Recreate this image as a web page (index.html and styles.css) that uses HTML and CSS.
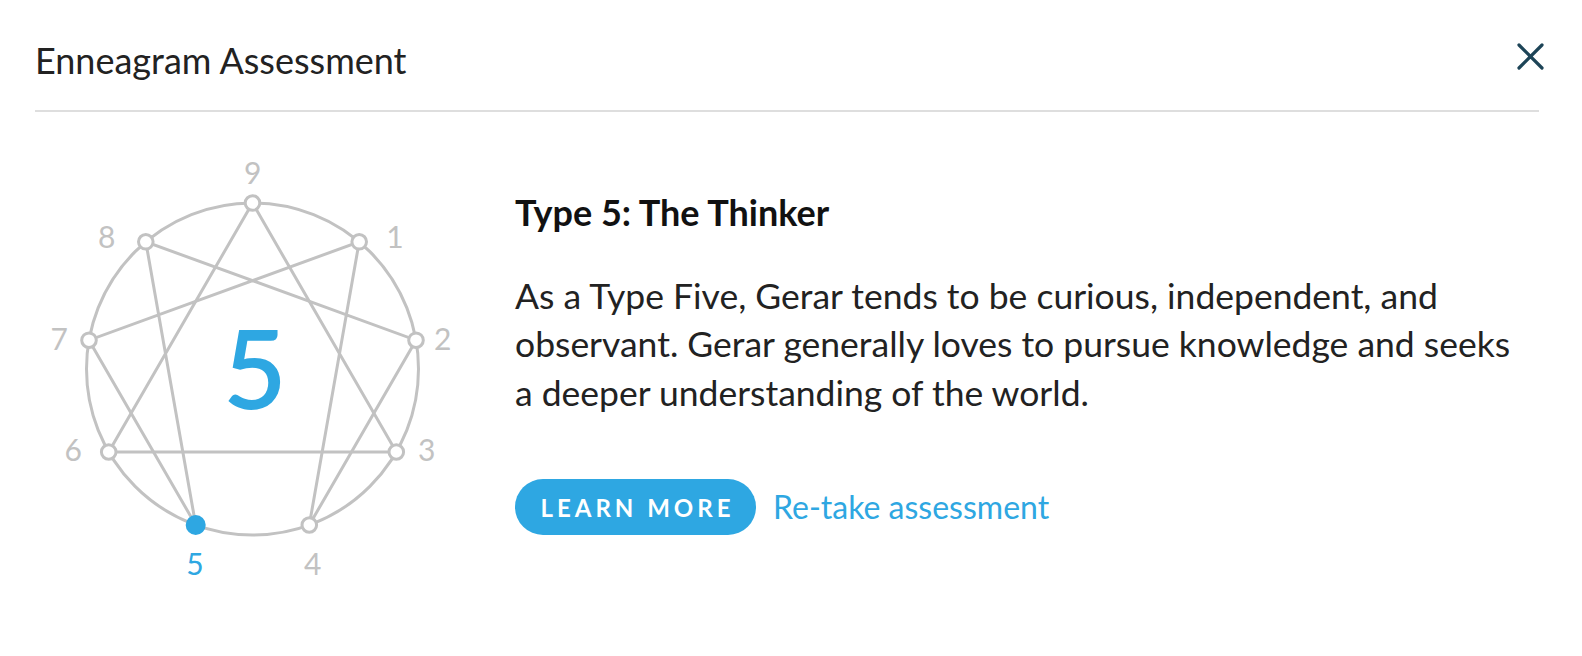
FILE: index.html
```html
<!DOCTYPE html>
<html lang="en">
<head>
<meta charset="utf-8">
<title>Enneagram Assessment</title>
<link rel="stylesheet" href="styles.css">
</head>
<body>
<div class="modal">
  <div class="modal-header">
    <h1 class="modal-title">Enneagram Assessment</h1>
    <button class="close-btn" aria-label="Close">
      <svg width="27" height="27" viewBox="0 0 27 27"><path d="M2 2 L25 25 M25 2 L2 25" stroke="#1d4457" stroke-width="3.2" stroke-linecap="round"/></svg>
    </button>
  </div>
  <div class="divider"></div>
  <div class="modal-body">
    <svg class="enneagram" width="440" height="450" viewBox="0 0 440 450">
      <g class="lines" fill="none" stroke="#c2c2c2" stroke-width="3">
        <circle cx="217.5" cy="229" r="166"/>
        <polygon points="217.5,63 361.3,312 73.7,312"/>
        <polygon points="324.2,101.8 274.3,385 381,200.2 110.8,101.8 160.7,385 54,200.2"/>
      </g>
      <g class="nodes" fill="#fff" stroke="#c2c2c2" stroke-width="3">
        <circle cx="217.5" cy="63" r="7.3"/>
        <circle cx="324.2" cy="101.8" r="7.3"/>
        <circle cx="381" cy="200.2" r="7.3"/>
        <circle cx="361.3" cy="312" r="7.3"/>
        <circle cx="274.3" cy="385" r="7.3"/>
        <circle cx="73.7" cy="312" r="7.3"/>
        <circle cx="54" cy="200.2" r="7.3"/>
        <circle cx="110.8" cy="101.8" r="7.3"/>
      </g>
      <circle cx="160.7" cy="385" r="10" fill="#2ea7e2"/>
      <g class="labels">
        <text x="217.7" y="44">9</text>
        <text x="360" y="108">1</text>
        <text x="407.7" y="210.3">2</text>
        <text x="391.7" y="321">3</text>
        <text x="277.7" y="434.5">4</text>
        <text class="active" x="160" y="434.5">5</text>
        <text x="38.3" y="321">6</text>
        <text x="24.3" y="210.3">7</text>
        <text x="71.7" y="108.3">8</text>
      </g>
      <text class="big-num" x="220" y="269.3">5</text>
    </svg>
    <div class="details">
      <h2 class="type-title">Type 5: The Thinker</h2>
      <p class="type-desc">As a Type Five, Gerar tends to be curious, independent, and observant. Gerar generally loves to pursue knowledge and seeks a deeper understanding of the world.</p>
      <div class="actions">
        <button class="learn-btn">LEARN MORE</button>
        <a class="retake-link" href="#">Re-take assessment</a>
      </div>
    </div>
  </div>
</div>
</body>
</html>
```

FILE: styles.css
```css
* { box-sizing: border-box; }
html, body {
  margin: 0;
  padding: 0;
  background: #fff;
  font-family: Lato, "Open Sans", "Liberation Sans", sans-serif;
}
.modal {
  padding: 0 38px 0 35px;
}
.modal-header {
  display: flex;
  align-items: center;
  justify-content: space-between;
  height: 110px;
  padding-bottom: 2px;
}
.modal-title {
  margin: 0;
  font-size: 36px;
  font-weight: 400;
  color: #222;
  line-height: 40px;
  margin-top: 12px;
}
.close-btn {
  border: 0;
  background: none;
  padding: 0;
  width: 27px;
  height: 27px;
  margin-top: 4px;
  cursor: pointer;
}
.close-btn svg { display: block; }
.divider {
  height: 2px;
  background: #dedede;
  margin-right: 5px;
}
.modal-body {
  display: flex;
  align-items: flex-start;
  gap: 40px;
  padding-top: 28px;
}
.enneagram {
  display: block;
  flex: none;
}
.labels text {
  font-family: Lato, "Open Sans", sans-serif;
  font-size: 30px;
  font-weight: 400;
  fill: #c2c2c2;
  text-anchor: middle;
}
.labels text.active { fill: #2ea7e2; }
.big-num {
  font-family: Lato, "Open Sans", sans-serif;
  font-size: 110px;
  font-weight: 600;
  fill: #2ea7e2;
  text-anchor: middle;
}
.details {
  flex: 1;
  padding-top: 52px;
}
.type-title {
  margin: 0;
  font-size: 36px;
  font-weight: 700;
  color: #111;
  line-height: 40px;
}
.type-desc {
  margin: 40px 0 0;
  max-width: 1000px;
  font-size: 35.5px;
  line-height: 48.4px;
  color: #222;
}
.actions {
  display: flex;
  align-items: center;
  gap: 17px;
  margin-top: 62px;
}
.learn-btn {
  border: 0;
  background: #2ea7e2;
  color: #fff;
  font-family: Lato, sans-serif;
  font-weight: 700;
  font-size: 24px;
  letter-spacing: 4px;
  height: 56px;
  width: 241px;
  border-radius: 28px;
  padding: 0 0 0 4px;
  cursor: pointer;
}
.retake-link {
  color: #2ea7e2;
  text-decoration: none;
  font-size: 32px;
  line-height: 40px;
}
```
